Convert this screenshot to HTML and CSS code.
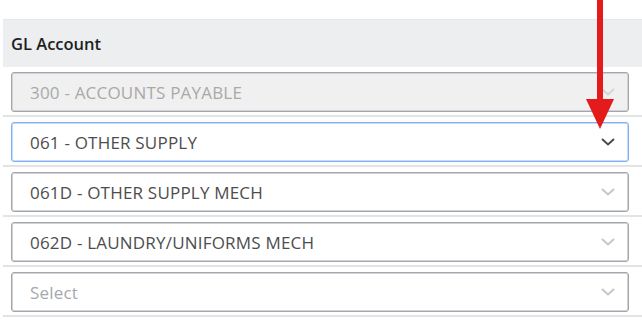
FILE: index.html
```html
<!DOCTYPE html>
<html lang="en">
<head>
    <meta charset="UTF-8">
    <title>GL Account</title>
    <link rel="stylesheet" href="styles.css">
</head>
<body>
    <div class="tabela">
        <div class="cabecalho">GL Account</div>

        <div class="linha">
            <div class="campo desativado">
                <span>300 - ACCOUNTS PAYABLE</span>
                <svg class="seta" width="14" height="8" viewBox="0 0 14 8"><path d="M1 1l6 5.5L13 1" fill="none" stroke="currentColor" stroke-width="2"/></svg>
            </div>
        </div>
        <div class="linha">
            <div class="campo foco">
                <span>061 - OTHER SUPPLY</span>
                <svg class="seta" width="14" height="8" viewBox="0 0 14 8"><path d="M1 1l6 5.5L13 1" fill="none" stroke="currentColor" stroke-width="2"/></svg>
            </div>
        </div>
        <div class="linha">
            <div class="campo">
                <span>061D - OTHER SUPPLY MECH</span>
                <svg class="seta" width="14" height="8" viewBox="0 0 14 8"><path d="M1 1l6 5.5L13 1" fill="none" stroke="currentColor" stroke-width="2"/></svg>
            </div>
        </div>
        <div class="linha">
            <div class="campo">
                <span>062D - LAUNDRY/UNIFORMS MECH</span>
                <svg class="seta" width="14" height="8" viewBox="0 0 14 8"><path d="M1 1l6 5.5L13 1" fill="none" stroke="currentColor" stroke-width="2"/></svg>
            </div>
        </div>
        <div class="linha">
            <div class="campo vazio">
                <span>Select</span>
                <svg class="seta" width="14" height="8" viewBox="0 0 14 8"><path d="M1 1l6 5.5L13 1" fill="none" stroke="currentColor" stroke-width="2"/></svg>
            </div>
        </div>
    </div>

    <!-- seta vermelha apontando para o campo -->
    <svg class="marcador" width="30" height="130" viewBox="0 0 30 130">
        <rect x="12" y="0" width="6" height="102" fill="#e31b1b"/>
        <polygon points="1,99 29,99 15,129" fill="#e31b1b"/>
    </svg>
</body>
</html>
```

FILE: styles.css
```css
body {
    margin: 0;
    background: #fff;
    font-family: "Open Sans", "Liberation Sans", sans-serif;
}

.tabela {
    margin: 19px 0 0 3px;
    border-top: 1px solid #e4e6e8;
}

.cabecalho {
    height: 47px;
    background: #eceef0;
    padding-left: 8px;
    display: flex;
    align-items: center;
    font-size: 16.5px;
    font-weight: 600;
    color: #1e1e1e;
}

.linha {
    padding: 5px 13px 3px 8px;
    border-bottom: 2px solid #e2e3e5;
}

.campo {
    height: 40px;
    box-sizing: border-box;
    border: 1px solid #a3a6ad;
    border-radius: 3px;
    box-shadow: inset 0 0 0 1px #d0d2d6;
    background: #fff;
    display: flex;
    align-items: center;
    justify-content: space-between;
    padding: 0 13px 0 18px;
    font-size: 17px;
    letter-spacing: 0.2px;
    color: #4d4d4d;
}

.campo .seta {
    color: #c4c6ca;
}

.desativado {
    background: #f0f0f0;
    color: #a9a9a9;
}

.desativado .seta {
    color: #d4d4d4;
}

.foco {
    border-color: #7fb0f0;
    box-shadow: inset 0 0 0 1px #c6dcf8;
}

.foco .seta {
    color: #4a4a4a;
}

.vazio {
    color: #a6a8ac;
}

.marcador {
    position: absolute;
    left: 585px;
    top: 0;
}
```
